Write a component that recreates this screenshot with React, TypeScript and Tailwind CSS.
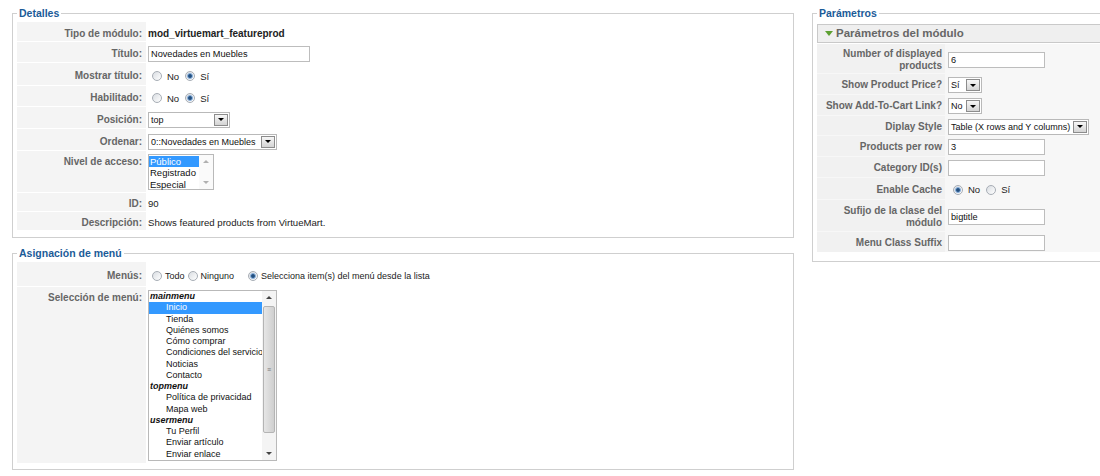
import React from "react";

const Radio = ({ on }: { on?: boolean }) => (
  <span className="inline-flex w-[10px] h-[10px] shrink-0 items-center justify-center rounded-full border border-[#a7adb5] bg-gradient-to-br from-[#d9dde2] to-white">
    {on && <span className="w-[6px] h-[6px] rounded-full bg-[#24507f] border border-[#8db5e2]" />}
  </span>
);

const RadioOpt = ({ on, label, small }: { on?: boolean; label: string; small?: boolean }) => (
  <span className={`inline-flex items-center ${small ? "gap-[3px] mr-[3px]" : "gap-[5px] mr-[6px]"}`}>
    <Radio on={on} />
    <span className={`${small ? "text-[9px]" : "text-[9.5px]"} text-[#222] pt-[2px]`}>{label}</span>
  </span>
);

const Select = ({ value, w }: { value: string; w: string }) => (
  <div className={`flex items-center h-[16px] border border-[#b9b9b9] bg-white ${w}`}>
    <span className="flex-1 pl-[2px] text-[9px] leading-[14px] text-[#111] whitespace-nowrap overflow-hidden">{value}</span>
    <span className="mr-px flex w-[14px] h-[12px] shrink-0 items-center justify-center border border-[#8c8c8c] bg-gradient-to-b from-[#f7f7f7] to-[#d4d4d4]">
      <span className="border-x-[3px] border-x-transparent border-t-[3px] border-t-black" />
    </span>
  </div>
);

const TextInput = ({ value = "", w }: { value?: string; w: string }) => (
  <input
    readOnly
    value={value}
    className={`h-[16px] border border-[#bdbdbd] bg-white pl-[2px] text-[9.2px] text-[#111] outline-none ${w}`}
  />
);

const Legend = ({ children }: { children: React.ReactNode }) => (
  <legend className="px-[2px] text-[10.5px] font-bold leading-[14px] text-[#1b5b98]">{children}</legend>
);

const LeftRow = ({ label, h, top, children }: { label: string; h: string; top?: boolean; children?: React.ReactNode }) => (
  <div className={`flex ${h}`}>
    <div className={`w-[129px] shrink-0 flex justify-end pr-[4px] bg-[#f4f4f4] text-[10px] leading-[12px] font-bold text-[#666] ${top ? "items-start pt-[5px]" : "items-center pt-[4px]"}`}>
      {label}
    </div>
    <div className={`flex-1 flex pl-[2px] ${top ? "items-start pt-[3px]" : "items-center pt-[4px]"}`}>{children}</div>
  </div>
);

const RightRow = ({ label, h, children }: { label: React.ReactNode; h: string; children?: React.ReactNode }) => (
  <div className={`flex ${h}`}>
    <div className="w-[128px] shrink-0 flex items-center justify-end pr-[3px] pt-[2px] text-right bg-[#f1f1f1] text-[10px] leading-[12px] font-bold text-[#666]">
      {label}
    </div>
    <div className="flex-1 flex items-center pl-[3px] pt-[2px]">{children}</div>
  </div>
);

const Arrow = ({ up, pale }: { up?: boolean; pale?: boolean }) => (
  <div className="h-[13px] flex items-center justify-center">
    <span
      className={
        up
          ? `border-x-[3px] border-x-transparent border-b-[3px] ${pale ? "border-b-[#b0b0b0]" : "border-b-[#444]"}`
          : `border-x-[3px] border-x-transparent border-t-[3px] ${pale ? "border-t-[#b0b0b0]" : "border-t-[#444]"}`
      }
    />
  </div>
);

const menuGroups = [
  { name: "mainmenu", items: ["Inicio", "Tienda", "Quiénes somos", "Cómo comprar", "Condiciones del servicio", "Noticias", "Contacto"] },
  { name: "topmenu", items: ["Política de privacidad", "Mapa web"] },
  { name: "usermenu", items: ["Tu Perfil", "Enviar artículo", "Enviar enlace"] },
];

export default function App() {
  return (
    <div className="w-[1100px] h-[476px] overflow-hidden bg-white flex items-start font-['Liberation_Sans',Arial,sans-serif] text-[#333]">
      <div className="ml-[12px] w-[782px] shrink-0 flex flex-col">
        {/* Detalles */}
        <fieldset className="mt-[6px] border border-[#cfcfcf] px-[4px] pb-[7px]">
          <Legend>Detalles</Legend>
          <div className="mt-[2px] flex flex-col gap-px">
            <LeftRow label="Tipo de módulo:" h="h-[19px]">
              <span className="text-[10px] font-bold text-[#222]">mod_virtuemart_featureprod</span>
            </LeftRow>
            <LeftRow label="Título:" h="h-[20px]">
              <TextInput value="Novedades en Muebles" w="w-[162px]" />
            </LeftRow>
            <LeftRow label="Mostrar título:" h="h-[22px]">
              <span className="ml-[4px] flex items-center">
                <RadioOpt label="No" />
                <RadioOpt on label="Sí" />
              </span>
            </LeftRow>
            <LeftRow label="Habilitado:" h="h-[20px]">
              <span className="ml-[4px] flex items-center">
                <RadioOpt label="No" />
                <RadioOpt on label="Sí" />
              </span>
            </LeftRow>
            <LeftRow label="Posición:" h="h-[21px]">
              <Select value="top" w="w-[82px]" />
            </LeftRow>
            <LeftRow label="Ordenar:" h="h-[21px]">
              <Select value="0::Novedades en Muebles" w="w-[129px]" />
            </LeftRow>
            <LeftRow label="Nivel de acceso:" h="h-[41px]" top>
              <div className="flex w-[66px] h-[36px] border border-[#b9b9b9] bg-white text-[9.5px] leading-[11.3px] text-[#111]">
                <div className="flex-1 pt-px">
                  <div className="bg-[#3399ff] text-white pl-px">Público</div>
                  <div className="pl-px">Registrado</div>
                  <div className="pl-px">Especial</div>
                </div>
                <div className="w-[14px] flex flex-col justify-between bg-[#fafafa]">
                  <Arrow up pale />
                  <Arrow pale />
                </div>
              </div>
            </LeftRow>
            <LeftRow label="ID:" h="h-[18px]">
              <span className="text-[9.6px] text-[#222]">90</span>
            </LeftRow>
            <LeftRow label="Descripción:" h="h-[18px]">
              <span className="text-[9.6px] text-[#222]">Shows featured products from VirtueMart.</span>
            </LeftRow>
          </div>
        </fieldset>

        {/* Asignación de menú */}
        <fieldset className="mt-[8px] border border-[#cfcfcf] px-[4px] pb-[6px]">
          <Legend>Asignación de menú</Legend>
          <div className="mt-[2px] flex flex-col gap-px">
            <LeftRow label="Menús:" h="h-[24px]">
              <span className="ml-[4px] flex items-center">
                <RadioOpt small label="Todo" />
                <RadioOpt small label="Ninguno" />
                <span className="ml-[11px] flex">
                  <RadioOpt small on label="Selecciona item(s) del menú desde la lista" />
                </span>
              </span>
            </LeftRow>
            <LeftRow label="Selección de menú:" h="h-[176px]" top>
              <div className="flex w-[129px] h-[171px] border border-[#b9b9b9] bg-white text-[9px] leading-[11.25px] text-[#111] overflow-hidden">
                <div className="flex-1 min-w-0">
                  {menuGroups.map((g) => (
                    <div key={g.name}>
                      <div className="h-[11.25px] pl-px font-bold italic">{g.name}</div>
                      {g.items.map((it) => (
                        <div
                          key={it}
                          className={`h-[11.25px] pl-[17px] whitespace-nowrap ${it === "Inicio" ? "bg-[#3399ff] text-white" : ""}`}
                        >
                          {it}
                        </div>
                      ))}
                    </div>
                  ))}
                </div>
                <div className="w-[14px] shrink-0 flex flex-col bg-[#f4f4f4]">
                  <Arrow up />
                  <div className="flex-1 px-[1px] pt-[2px] pb-[14px]">
                    <div className="h-full rounded-[2px] border border-[#b4b4b4] bg-gradient-to-r from-[#e6e6e6] to-[#cfcfcf] flex items-center justify-center">
                      <span className="text-[7px] leading-none text-[#777]">≡</span>
                    </div>
                  </div>
                  <Arrow />
                </div>
              </div>
            </LeftRow>
          </div>
        </fieldset>
      </div>

      {/* Parámetros */}
      <div className="ml-[18px] w-[330px] shrink-0">
        <fieldset className="mt-[6px] border border-[#cfcfcf] pl-[4px] pb-[9px]">
          <Legend>Parámetros</Legend>
          <div className="mt-[4px]">
            <div className="h-[19px] border border-r-0 border-[#c9c9c9] bg-[#efefef] flex items-center pl-[7px] gap-[3px]">
              <span className="border-x-[4px] border-x-transparent border-t-[5px] border-t-[#5da032]" />
              <span className="text-[11.5px] font-bold text-[#666]">Parámetros del módulo</span>
            </div>
            <div className="mt-px flex flex-col gap-px bg-[#f7f7f7]">
              <RightRow label={<>Number of displayed<br />products</>} h="h-[29px]">
                <TextInput value="6" w="w-[97px]" />
              </RightRow>
              <RightRow label="Show Product Price?" h="h-[20px]">
                <Select value="Sí" w="w-[34px]" />
              </RightRow>
              <RightRow label="Show Add-To-Cart Link?" h="h-[20px]">
                <Select value="No" w="w-[34px]" />
              </RightRow>
              <RightRow label="Diplay Style" h="h-[19px]">
                <Select value="Table (X rows and Y columns)" w="w-[141px]" />
              </RightRow>
              <RightRow label="Products per row" h="h-[20px]">
                <TextInput value="3" w="w-[97px]" />
              </RightRow>
              <RightRow label="Category ID(s)" h="h-[20px]">
                <TextInput w="w-[97px]" />
              </RightRow>
              <RightRow label="Enable Cache" h="h-[21px]">
                <span className="ml-[5px] flex items-center">
                  <RadioOpt on label="No" />
                  <RadioOpt label="Sí" />
                </span>
              </RightRow>
              <RightRow label={<>Sufijo de la clase del<br />módulo</>} h="h-[31px]">
                <TextInput value="bigtitle" w="w-[97px]" />
              </RightRow>
              <RightRow label="Menu Class Suffix" h="h-[20px]">
                <TextInput w="w-[97px]" />
              </RightRow>
            </div>
          </div>
        </fieldset>
      </div>
    </div>
  );
}
